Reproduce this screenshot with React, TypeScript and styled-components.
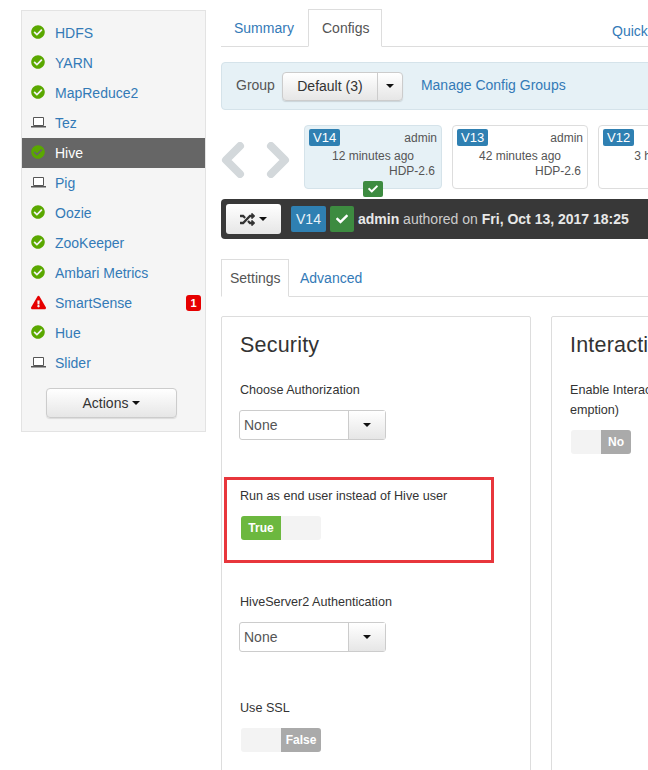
import React from 'react';
import styled, { createGlobalStyle } from 'styled-components';
import { FaCheck, FaCheckCircle, FaExclamationTriangle, FaRandom } from 'react-icons/fa';

const Global = createGlobalStyle`
  html, body { margin: 0; padding: 0; background: #fff; }
  body { font-family: "Liberation Sans", Arial, sans-serif; font-size: 14px; color: #333; }
  * { box-sizing: border-box; }
`

const Laptop = () => <svg width='15' height='11' viewBox='0 0 15 11' fill='none'>
  <path d='M2.5 .5h10v8h-10z' stroke='#555' fill='#fff' />
  <path d='M0 9h15v1.5H0z' fill='#555' />
</svg>

const Chevron = ({ flip }: { flip?: boolean }) => <svg width='24' height='36' viewBox='0 0 24 36' fill='none'>
  <path d={flip ? 'M5 4l14 14L5 32' : 'M19 4L5 18l14 14'} stroke='#d3d8db' strokeWidth='8' strokeLinejoin='round' strokeLinecap='round' />
</svg>

const services = [
  { name: 'HDFS', status: 'ok' },
  { name: 'YARN', status: 'ok' },
  { name: 'MapReduce2', status: 'ok' },
  { name: 'Tez', status: 'client' },
  { name: 'Hive', status: 'ok', active: true },
  { name: 'Pig', status: 'client' },
  { name: 'Oozie', status: 'ok' },
  { name: 'ZooKeeper', status: 'ok' },
  { name: 'Ambari Metrics', status: 'ok' },
  { name: 'SmartSense', status: 'alert', alerts: 1 },
  { name: 'Hue', status: 'ok' },
  { name: 'Slider', status: 'client' },
]

const versions = [
  { id: 'V14', time: '12 minutes ago', stack: 'HDP-2.6', current: true },
  { id: 'V13', time: '42 minutes ago', stack: 'HDP-2.6' },
  { id: 'V12', time: '3 hours ago', stack: 'HDP-2.6' },
]

const Select = ({ value }: { value: string }) => <SelectBox>
  <SelectValue>{value}</SelectValue>
  <SelectArrow><Caret /></SelectArrow>
</SelectBox>

export default function App() {
  return <Page>
    <Global />
    <Sidebar>
      {services.map(s => <ServiceRow key={s.name} $active={s.active}>
        <StatusIcon $status={s.status}>
          {s.status === 'ok' && <FaCheckCircle size={14} />}
          {s.status === 'client' && <Laptop />}
          {s.status === 'alert' && <FaExclamationTriangle size={15} />}
        </StatusIcon>
        <ServiceName $active={s.active}>{s.name}</ServiceName>
        {s.alerts && <AlertCount>{s.alerts}</AlertCount>}
      </ServiceRow>)}
      <ActionsButton>Actions <Caret /></ActionsButton>
    </Sidebar>

    <Main>
      <TopTabs>
        <TabLink>Summary</TabLink>
        <ActiveTab>Configs</ActiveTab>
        <QuickLink>Quick Links</QuickLink>
      </TopTabs>

      <GroupBar>
        <GroupLabel>Group</GroupLabel>
        <GroupButton>
          <GroupName>Default (3)</GroupName>
          <GroupCaret><Caret /></GroupCaret>
        </GroupButton>
        <ManageLink>Manage Config Groups</ManageLink>
      </GroupBar>

      <VersionRow>
        <Arrows>
          <Chevron />
          <Chevron flip />
        </Arrows>
        {versions.map(v => <VersionCard key={v.id} $current={v.current}>
          <CardTop>
            <VersionBadge>{v.id}</VersionBadge>
            <span>admin</span>
          </CardTop>
          <CardTime>{v.time}</CardTime>
          <CardStack>{v.stack}</CardStack>
          {v.current && <CurrentMark><FaCheck size={10} /></CurrentMark>}
        </VersionCard>)}
      </VersionRow>

      <AuthorBar>
        <CompareButton><FaRandom size={15} /><Caret /></CompareButton>
        <BarVersion>V14</BarVersion>
        <BarCheck><FaCheck size={12} /></BarCheck>
        <AuthorText><b>admin</b> authored on <b>Fri, Oct 13, 2017 18:25</b></AuthorText>
      </AuthorBar>

      <SubTabs>
        <SubTabActive>Settings</SubTabActive>
        <SubTabLink>Advanced</SubTabLink>
      </SubTabs>

      <Panels>
        <Panel>
          <PanelTitle>Security</PanelTitle>
          <FieldLabel>Choose Authorization</FieldLabel>
          <Select value='None' />
          <Highlight>
            <FieldLabel>Run as end user instead of Hive user</FieldLabel>
            <Toggle checked label='True' />
          </Highlight>
          <AuthField>
            <FieldLabel>HiveServer2 Authentication</FieldLabel>
            <Select value='None' />
          </AuthField>
          <SslField>
            <FieldLabel>Use SSL</FieldLabel>
            <Toggle label='False' />
          </SslField>
        </Panel>
        <SecondPanel>
          <PanelTitle>Interactive Query</PanelTitle>
          <WrapLabel>Enable Interactive Query (Tech Preview, pre-<br />emption)</WrapLabel>
          <ShortToggle label='No' />
        </SecondPanel>
      </Panels>
    </Main>
  </Page>
}

const ToggleBase = ({ label, checked, className }: { label: string, checked?: boolean, className?: string }) => <div className={className}>
  {checked ? <><ToggleOn>{label}</ToggleOn><ToggleEmpty /></> : <><ToggleEmpty /><ToggleOff>{label}</ToggleOff></>}
</div>

const Page = styled.div`
  width: 648px; height: 770px;
  overflow: hidden;
  display: flex;
  align-items: flex-start;
  gap: 15px;
  padding: 9px 0 0 21px;
`
const Caret = styled.i`
  display: inline-block;
  width: 0; height: 0;
  vertical-align: middle;
  border-top: 4px solid #111;
  border-left: 4px solid transparent;
  border-right: 4px solid transparent;
`
const Sidebar = styled.div`
  flex: none;
  width: 185px;
  margin-top: 1px;
  background: #f5f5f5;
  border: 1px solid #e3e3e3;
  padding: 7px 0 13px;
`
const ServiceRow = styled.div<{ $active?: boolean }>`
  height: 30px;
  display: flex;
  align-items: center;
  padding: 0 4px 0 8px;
  background: ${p => p.$active ? '#666' : 'transparent'};
`
const StatusIcon = styled.span<{ $status: string }>`
  width: 16px;
  margin-right: 9px;
  display: flex;
  justify-content: center;
  color: ${p => p.$status === 'alert' ? '#e60000' : '#5aa800'};
  position: relative;
  top: -1px;
`
const ServiceName = styled.span<{ $active?: boolean }>`
  flex: 1;
  font-size: 14px;
  color: ${p => p.$active ? '#fff' : '#337ab7'};
`
const AlertCount = styled.span`
  width: 15px; height: 16px;
  background: #e60000;
  border-radius: 3px;
  color: #fff;
  font-size: 11px;
  font-weight: bold;
  text-align: center;
  line-height: 16px;
`
const ActionsButton = styled.div`
  width: 131px; height: 30px;
  margin: 10px 0 0 24px;
  border: 1px solid #ccc;
  border-radius: 4px;
  background: linear-gradient(#fff, #e6e6e6);
  box-shadow: 0 1px 1px rgba(0,0,0,.1);
  display: flex;
  align-items: center;
  justify-content: center;
  gap: 4px;
  font-size: 14px;
  color: #333;
`
const Main = styled.div`
  flex: none;
  width: 600px;
`
const TopTabs = styled.div`
  height: 38px;
  display: flex;
  border-bottom: 1px solid #ddd;
`
const TabLink = styled.div`
  padding: 11px 14px 0 13px;
  width: 87px;
  color: #337ab7;
`
const ActiveTab = styled.div`
  width: 74px; height: 38px;
  border: 1px solid #ddd;
  border-bottom-color: #fff;
  padding: 10px 0 0 13px;
  color: #555;
`
const QuickLink = styled.div`
  margin-left: 230px;
  padding-top: 14px;
  white-space: nowrap;
  color: #337ab7;
`
const GroupBar = styled.div`
  height: 48px;
  margin-top: 15px;
  display: flex;
  align-items: center;
  padding-left: 14px;
  background: #e6f1f6;
  border: 1px solid #d5e3ea;
  border-radius: 4px;
`
const GroupLabel = styled.span`
  color: #555;
  margin-right: 7px;
  position: relative;
  top: -1px;
`
const GroupButton = styled.div`
  width: 121px; height: 29px;
  display: flex;
  border: 1px solid #ccc;
  border-radius: 4px;
  background: linear-gradient(#fff, #e6e6e6);
  box-shadow: 0 1px 1px rgba(0,0,0,.12);
  color: #333;
`
const GroupName = styled.span`
  flex: 1;
  text-align: center;
  line-height: 27px;
`
const GroupCaret = styled.span`
  width: 25px;
  display: flex;
  align-items: center;
  justify-content: center;
  border-left: 1px solid #ccc;
`
const ManageLink = styled.span`
  margin-left: 18px;
  color: #337ab7;
  position: relative;
  top: -1px;
`
const VersionRow = styled.div`
  margin-top: 15px;
  display: flex;
  gap: 10px;
`
const Arrows = styled.div`
  width: 73px;
  display: flex;
  align-items: center;
  gap: 21px;
  padding-top: 6px;
  svg { flex: none; }
`
const VersionCard = styled.div<{ $current?: boolean }>`
  flex: none;
  position: relative;
  width: ${p => p.$current ? 138 : 136}px;
  height: 64px;
  padding: 3px 4px;
  font-size: 12px;
  color: #555;
  background: ${p => p.$current ? '#e6f1f6' : '#fff'};
  border: 1px solid ${p => p.$current ? '#d5e3ea' : '#ddd'};
  border-radius: 4px;
`
const CardTop = styled.div`
  display: flex;
  align-items: center;
  justify-content: space-between;
`
const VersionBadge = styled.span`
  background: #2f80b2;
  color: #fff;
  font-size: 13px;
  line-height: 17px;
  padding: 0 4px;
  border-radius: 2px;
`
const CardTime = styled.div`
  margin-top: 3px;
  text-align: center;
  line-height: 15px;
`
const CardStack = styled.div`
  text-align: right;
  padding-right: 2px;
  line-height: 15px;
`
const CurrentMark = styled.span`
  position: absolute;
  left: 58px; bottom: -9px;
  width: 20px; height: 16px;
  background: #3d8b40;
  color: #fff;
  border-radius: 2px;
  display: flex;
  align-items: center;
  justify-content: center;
`
const AuthorBar = styled.div`
  height: 40px;
  margin-top: 10px;
  display: flex;
  align-items: center;
  padding-left: 5px;
  background: #383838;
  border-radius: 4px;
`
const CompareButton = styled.div`
  width: 55px; height: 30px;
  background: linear-gradient(#fff, #e6e6e6);
  border-radius: 3px;
  display: flex;
  align-items: center;
  justify-content: center;
  gap: 4px;
  color: #333;
  margin-right: 10px;
`
const BarVersion = styled.span`
  width: 35px; height: 26px;
  background: #2f80b2;
  color: #e8f2f8;
  text-align: center;
  line-height: 26px;
  border-radius: 2px;
  margin-right: 4px;
`
const BarCheck = styled.span`
  width: 24px; height: 26px;
  background: #3d8b40;
  color: #fff;
  border-radius: 2px;
  display: flex;
  align-items: center;
  justify-content: center;
  margin-right: 4px;
`
const AuthorText = styled.span`
  color: #ccc;
  b { color: #e8e8e8; }
`
const SubTabs = styled.div`
  height: 38px;
  margin-top: 20px;
  display: flex;
  border-bottom: 1px solid #ddd;
`
const SubTabActive = styled.div`
  width: 68px; height: 38px;
  border: 1px solid #ddd;
  border-bottom-color: #fff;
  padding: 10px 0 0 8px;
  color: #555;
`
const SubTabLink = styled.div`
  padding: 11px 0 0 11px;
  color: #337ab7;
`
const Panels = styled.div`
  margin-top: 19px;
  display: flex;
  gap: 20px;
`
const Panel = styled.div`
  flex: none;
  width: 310px;
  height: 480px;
  border: 1px solid #ddd;
  border-radius: 2px;
  padding: 15px 18px;
`
const SecondPanel = styled(Panel)`
  width: 290px;
`
const PanelTitle = styled.div`
  font-size: 21.5px;
  letter-spacing: .2px;
  line-height: 26px;
  color: #333;
  white-space: nowrap;
  margin-bottom: 21px;
`
const FieldLabel = styled.div`
  font-size: 12.6px;
  line-height: 20px;
  color: #333;
  padding-top: 1px;
  margin-bottom: 10px;
`
const WrapLabel = styled(FieldLabel)`
  white-space: nowrap;
`
const SelectBox = styled.div`
  width: 147px; height: 30px;
  display: flex;
  border: 1px solid #ccc;
  border-radius: 3px;
  margin-left: -1px;
`
const SelectValue = styled.div`
  flex: 1;
  padding-left: 4px;
  line-height: 28px;
  color: #555;
`
const SelectArrow = styled.div`
  width: 37px;
  display: flex;
  align-items: center;
  justify-content: center;
  border-left: 1px solid #ccc;
  background: linear-gradient(#fff, #e6e6e6);
`
const Highlight = styled.div`
  width: 270px; height: 86px;
  margin: 37px 0 0 -16px;
  border: 3px solid #e8363c;
  padding: 5px 0 0 13px;
`
const AuthField = styled.div`
  margin-top: 28px;
`
const SslField = styled.div`
  margin-top: 45px;
`
const Toggle = styled(ToggleBase)`
  width: 80px; height: 24px;
  margin: 1px 0 0 1px;
  display: flex;
  border-radius: 3px;
  overflow: hidden;
  background: #f3f3f3;
  font-size: 12px;
  font-weight: bold;
  color: #fff;
`
const ShortToggle = styled(Toggle)`
  width: 60px;
`
const ToggleEmpty = styled.span`
  flex: 1;
`
const ToggleOn = styled.span`
  flex: 1;
  background: #6cb83f;
  text-align: center;
  line-height: 24px;
`
const ToggleOff = styled.span`
  flex: 1;
  background: #aaa;
  text-align: center;
  line-height: 24px;
`
